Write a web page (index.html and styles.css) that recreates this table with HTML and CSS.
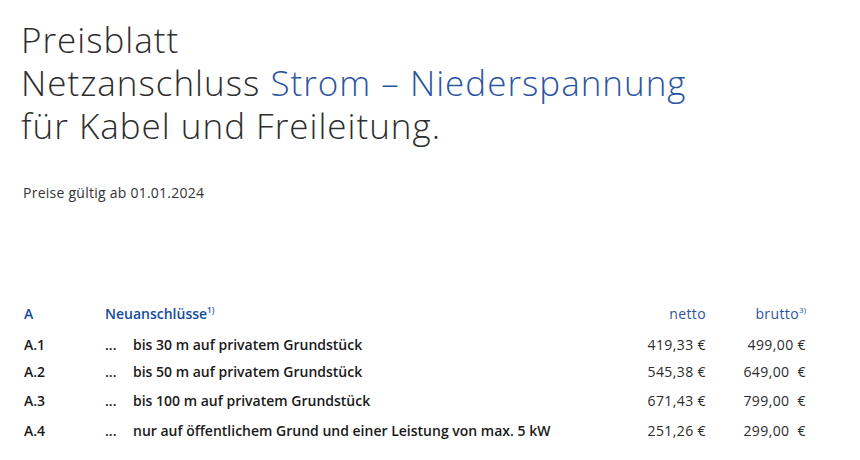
FILE: index.html
```html
<!DOCTYPE html>
<html lang="de">
<head>
<meta charset="utf-8">
<link rel="stylesheet" href="styles.css">
</head>
<body>
<div class="page">
  <h1 class="title">
    <span class="line">Preisblatt</span>
    <span class="line">Netzanschluss <span class="accent">Strom – Niederspannung</span></span>
    <span class="line">für Kabel und Freileitung.</span>
  </h1>
  <p class="valid">Preise gültig ab 01.01.2024</p>

  <div class="table">
    <div class="row head">
      <span class="code">A</span>
      <span class="desc">Neuanschlüsse<sup>1)</sup></span>
      <span class="netto">netto</span>
      <span class="brutto">brutto<sup>3)</sup></span>
    </div>
    <div class="row r1">
      <span class="code">A.1</span>
      <span class="desc"><span class="dots">...</span>bis 30 m auf privatem Grundstück</span>
      <span class="netto">419,33 €</span>
      <span class="brutto">499,00 €</span>
    </div>
    <div class="row r2">
      <span class="code">A.2</span>
      <span class="desc"><span class="dots">...</span>bis 50 m auf privatem Grundstück</span>
      <span class="netto">545,38 €</span>
      <span class="brutto">649,00&nbsp; €</span>
    </div>
    <div class="row r3">
      <span class="code">A.3</span>
      <span class="desc"><span class="dots">...</span>bis 100 m auf privatem Grundstück</span>
      <span class="netto">671,43 €</span>
      <span class="brutto">799,00&nbsp; €</span>
    </div>
    <div class="row r4">
      <span class="code">A.4</span>
      <span class="desc"><span class="dots">...</span>nur auf öffentlichem Grund und einer Leistung von max. 5 kW</span>
      <span class="netto">251,26 €</span>
      <span class="brutto">299,00&nbsp; €</span>
    </div>
  </div>
</div>
</body>
</html>
```

FILE: styles.css
```css
html, body {
  margin: 0;
  padding: 0;
  background: #ffffff;
}
body {
  font-family: "Open Sans", "Lato", sans-serif;
  color: #2b2b2b;
}
.page {
  padding: 18px 0 0 21px;
  width: 839px;
}
.title {
  margin: 0;
  font-weight: 300;
  font-size: 35px;
  line-height: 43px;
  letter-spacing: 1px;
  color: #2d2d2d;
  display: flex;
  flex-direction: column;
}
.accent {
  color: #2c55a2;
}
.valid {
  margin: 37px 0 0 2px;
  font-size: 14px;
  line-height: 18px;
  letter-spacing: 0.25px;
  color: #333;
}
.table {
  margin-top: 102px;
  width: 785px;
  font-size: 14px;
}
.row {
  display: grid;
  grid-template-columns: 84px 1fr 110px 100px;
  align-items: baseline;
  height: 30px;
}
.row.head {
  height: 31px;
}
.row.r1 { height: 27px; }
.row.r2 { height: 29px; }
.row.r3 { height: 30px; }
.code {
  padding-left: 3px;
  font-weight: 600;
  color: #1a1a1a;
}
.head .code,
.head .desc {
  color: #154d9c;
  font-weight: 600;
}
.desc {
  font-weight: 600;
  color: #1a1a1a;
}
.dots {
  display: inline-block;
  width: 28px;
}
.netto, .brutto {
  text-align: right;
  font-weight: 400;
  letter-spacing: 0.4px;
  color: #2b2b2b;
}
.head .netto, .head .brutto {
  color: #2c55a2;
}
sup {
  font-size: 8px;
  vertical-align: 6px;
  line-height: 0;
  letter-spacing: 0;
}
```
